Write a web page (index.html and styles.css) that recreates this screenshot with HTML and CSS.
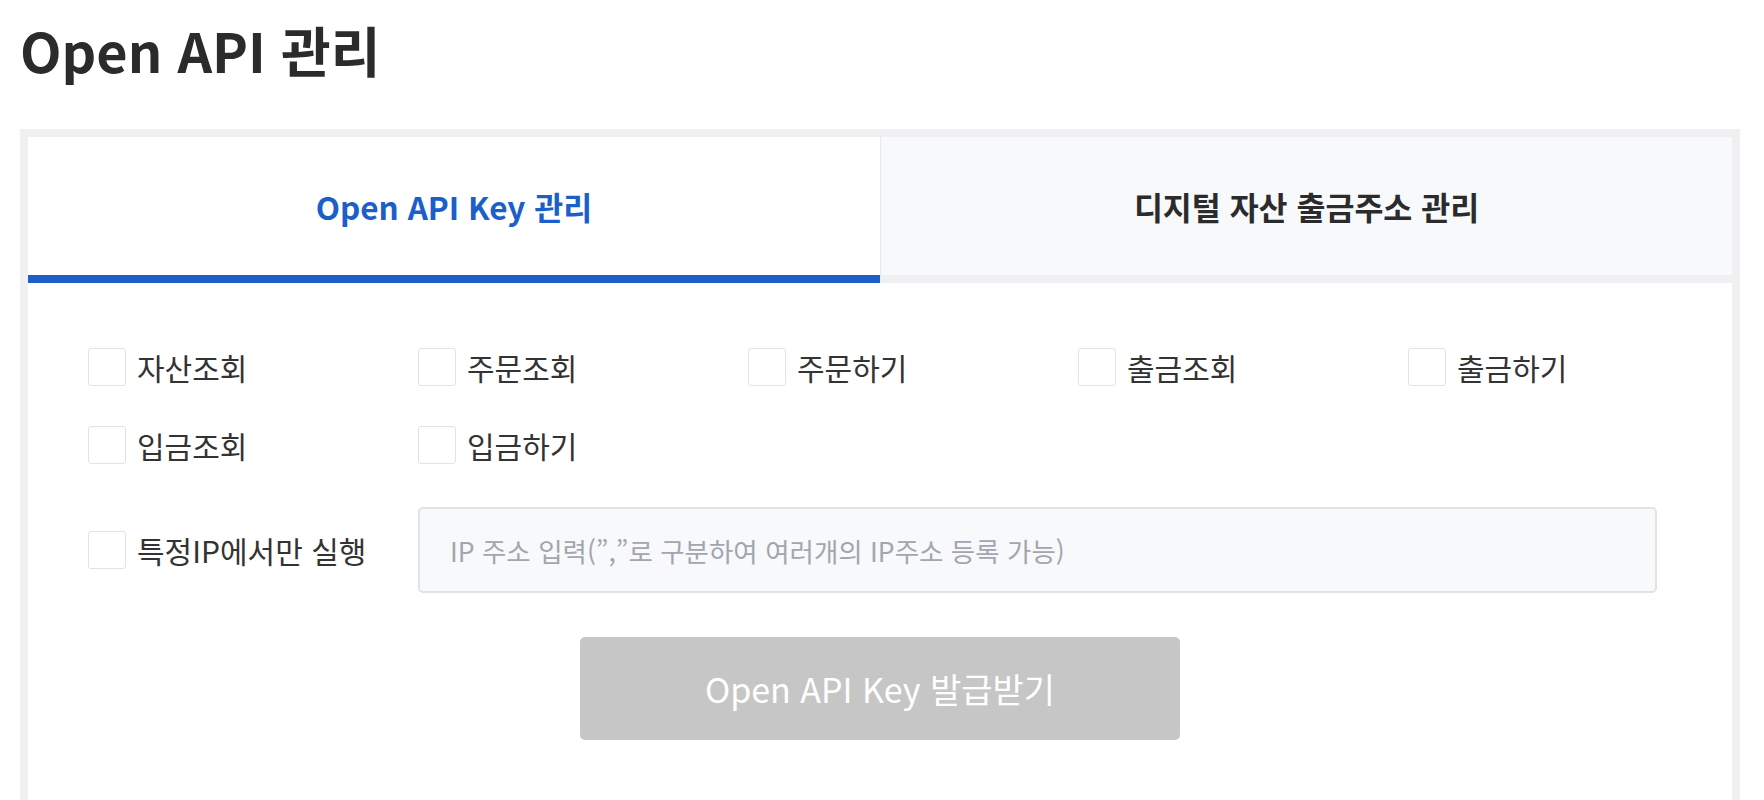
FILE: index.html
```html
<!DOCTYPE html>
<html lang="ko">
<head>
<meta charset="utf-8">
<title>Open API 관리</title>
<link rel="stylesheet" href="styles.css">
</head>
<body>
<h1 class="page-title">Open API 관리</h1>
<div class="panel">
  <div class="tabs">
    <div class="tab tab-active">Open API Key 관리</div>
    <div class="tab tab-inactive">디지털 자산 출금주소 관리</div>
  </div>
  <div class="content">
    <div class="perm-grid">
      <label class="perm"><span class="box"></span><span class="perm-text">자산조회</span></label>
      <label class="perm"><span class="box"></span><span class="perm-text">주문조회</span></label>
      <label class="perm"><span class="box"></span><span class="perm-text">주문하기</span></label>
      <label class="perm"><span class="box"></span><span class="perm-text">출금조회</span></label>
      <label class="perm"><span class="box"></span><span class="perm-text">출금하기</span></label>
      <label class="perm"><span class="box"></span><span class="perm-text">입금조회</span></label>
      <label class="perm"><span class="box"></span><span class="perm-text">입금하기</span></label>
    </div>
    <div class="ip-row">
      <label class="perm ip-perm"><span class="box"></span><span class="perm-text">특정IP에서만 실행</span></label>
      <div class="ip-input">IP 주소 입력(”,”로 구분하여 여러개의 IP주소 등록 가능)</div>
    </div>
    <div class="btn-row">
      <div class="issue-btn">Open API Key 발급받기</div>
    </div>
  </div>
</div>
</body>
</html>
```
FILE: styles.css
```css
html, body {
  margin: 0;
  padding: 0;
  overflow: hidden;
  height: 800px;
  background: #ffffff;
}
body {
  font-family: "Noto Sans CJK KR", "Noto Sans", sans-serif;
  color: #2b2b2b;
  padding: 0 24px 0 20px;
}
.page-title {
  margin: 20px 0 49px 0;
  font-size: 54px;
  line-height: 60px;
  font-weight: 700;
  color: #2b2b2b;
}
.panel {
  border: 8px solid #f0f0f2;
  border-bottom: none;
  background: #ffffff;
  height: 700px;
}
.tabs {
  display: grid;
  grid-template-columns: 1fr 1fr;
}
.tab {
  height: 138px;
  display: flex;
  align-items: center;
  justify-content: center;
  font-size: 31.5px;
  font-weight: 700;
  border-bottom: 8px solid #f0f0f2;
}
.tab-active {
  color: #1c5fc9;
  background: #ffffff;
  border-bottom-color: #1c5fc9;
}
.tab-inactive {
  color: #2b2b2b;
  background: #f8f9fb;
  border-left: 1px solid #e7e9ed;
}
.content {
  padding: 65px 60px 0 60px;
}
.perm-grid {
  display: grid;
  grid-template-columns: repeat(5, 330px);
  row-gap: 40px;
}
.perm {
  display: flex;
  align-items: center;
  gap: 11px;
  height: 38px;
}
.box {
  width: 36px;
  height: 36px;
  border: 1px solid #e2e2e8;
  border-radius: 3px;
  background: #ffffff;
  flex: none;
}
.perm-text {
  font-size: 30px;
  color: #333333;
  white-space: nowrap;
}
.ip-row {
  display: flex;
  align-items: center;
  margin-top: 43px;
}
.ip-perm {
  width: 330px;
  flex: none;
}
.ip-input {
  width: 1239px;
  height: 86px;
  box-sizing: border-box;
  border: 2px solid #e1e3e7;
  border-radius: 5px;
  background: #f8f9fb;
  display: flex;
  align-items: center;
  padding-left: 30px;
  font-size: 26.5px;
  color: #a2a6af;
}
.btn-row {
  display: flex;
  justify-content: center;
  margin-top: 44px;
}
.issue-btn {
  width: 600px;
  height: 103px;
  border-radius: 5px;
  background: #c6c6c6;
  color: #ffffff;
  font-size: 34px;
  display: flex;
  align-items: center;
  justify-content: center;
}
```
